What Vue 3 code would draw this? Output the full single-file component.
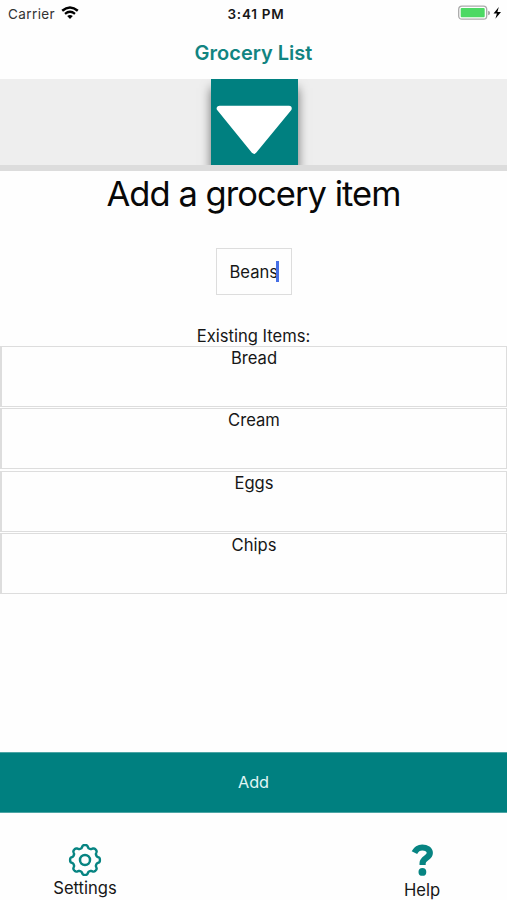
<script setup>
const items = ['Bread', 'Cream', 'Eggs', 'Chips']

// Eight-toothed outline, sampled around the circle
const gear = Array.from({ length: 128 }, (_, i) => {
  const a = (i / 128) * Math.PI * 2
  const r = 13.5 + 1.45 * Math.tanh(1.8 * Math.cos(8 * a) + 0.2)
  return `${(17 + r * Math.sin(a)).toFixed(2)},${(17 - r * Math.cos(a)).toFixed(2)}`
}).join(' ')
</script>

<template>
  <div class="screen">
    <header class="status">
      <div class="network">
        <span class="carrier">Carrier</span>
        <svg class="wifi" width="18" height="14" viewBox="0 0 18 14" fill="none" stroke="#000">
          <path d="M1.2 4.8Q9 -1.7 16.8 4.8" stroke-width="2.5" />
          <path d="M4 7.8Q9 3.7 14 7.8" stroke-width="2.2" />
          <path d="M6.2 10.1Q9 7.9 11.8 10.1L9 13Z" fill="#000" stroke="none" />
        </svg>
      </div>
      <span class="time">3:41 PM</span>
      <div class="power">
        <svg width="44" height="16" viewBox="0 0 44 16">
          <rect x="0.7" y="1.2" width="28" height="13" rx="3.2" fill="#fff" stroke="#aaa" stroke-width="1.3" />
          <rect x="2.7" y="3.1" width="24" height="9.2" rx="1" fill="#4cd964" />
          <path d="M30.2 5.8Q32 6.3 32 8T30.2 10.2Z" fill="#999" />
          <path d="M40.8 2L35.5 8.6H38.9L37.4 13.8L43 6.9H39.4Z" fill="#000" />
        </svg>
      </div>
    </header>
    <h1 class="title"><span>Grocery List</span></h1>
    <section class="banner">
      <div class="drop">
        <svg width="87" height="86" viewBox="0 0 87 86">
          <path d="M8.5 29.5H78L43 72Z" fill="#fff" stroke="#fff" stroke-width="5.5" stroke-linejoin="round" />
        </svg>
      </div>
    </section>
    <main class="content">
      <h2 class="heading"><span>Add a grocery item</span></h2>
      <div class="field"><span>Beans</span><i class="caret"></i></div>
      <p class="label"><span>Existing Items:</span></p>
      <ul class="list">
        <li v-for="item in items" :key="item">{{ item }}</li>
      </ul>
    </main>
    <button class="add">Add</button>
    <nav class="tabs">
      <div class="tab settings">
        <svg width="34" height="34" viewBox="0 0 34 34" fill="none" stroke="#078482">
          <polygon :points="gear" stroke-width="2.4" stroke-linejoin="round" />
          <circle cx="17" cy="17" r="5" stroke-width="2.5" />
        </svg>
        <span>Settings</span>
      </div>
      <div class="tab help">
        <svg width="24" height="34" viewBox="0 0 24 34">
          <path d="M4.4 9.6C6.2 6.2 8.7 4.5 12.2 4.5C16.6 4.5 19.8 6.8 19.8 10.1C19.8 15.2 12.6 14.9 12.6 20.2V22" fill="none" stroke="#078482" stroke-width="6.2" />
          <circle cx="12.4" cy="28.9" r="3.9" fill="#078482" />
        </svg>
        <span>Help</span>
      </div>
    </nav>
  </div>
</template>

<style>
body {
  margin: 0;
  background: #fff;
}
</style>

<style scoped>
.screen {
  width: 507px;
  height: 900px;
  overflow: hidden;
  display: flex;
  flex-direction: column;
  background: #fefefe;
  color: #171717;
  font: 400 16.6px/20px Inter, sans-serif;
}
.status {
  height: 28px;
  flex: none;
  display: grid;
  grid-template-columns: 1fr auto 1fr;
  align-items: center;
  padding: 0 5px 0 8px;
  box-sizing: border-box;
  font-size: 13.5px;
}
.network {
  display: flex;
  align-items: center;
  gap: 6px;
}
.carrier {
  color: #333;
  letter-spacing: 0.4px;
}
.wifi {
  margin-top: -2px;
}
.time {
  margin-left: 2px;
  font-size: 13.5px;
  font-weight: 600;
  letter-spacing: 0.75px;
}
.power {
  display: flex;
  justify-content: flex-end;
  margin-top: -2px;
}
.title {
  height: 51px;
  flex: none;
  margin: 0;
  color: #118481;
  font-size: 20px;
  font-weight: 600;
  line-height: 50px;
  text-align: center;
}
.banner {
  height: 92px;
  flex: none;
  box-sizing: border-box;
  border-bottom: 6px solid #dcdcdc;
  background: #eee;
  display: flex;
  justify-content: center;
}
.drop {
  width: 87px;
  height: 86px;
  margin-left: 2px;
  background: #008080;
  box-shadow: 0 9px 10px 0 #0008;
  clip-path: inset(0 -20px 0 -20px);
}
.drop svg {
  display: block;
}
.content {
  height: 581px;
  flex: none;
  display: flex;
  flex-direction: column;
  align-items: center;
}
.heading {
  margin: 0;
  height: 77px;
  color: #080808;
  font-size: 34.5px;
  font-weight: 400;
  line-height: 46px;
  letter-spacing: -0.95px;
}
.field {
  width: 76px;
  height: 47px;
  box-sizing: border-box;
  border: 1px solid #ddd;
  display: flex;
  align-items: center;
  padding-left: 13px;
}
.caret {
  width: 2.5px;
  height: 21px;
  flex: none;
  margin-left: -2px;
  background: #466fe5;
}
.label {
  height: 20px;
  margin: 31px 0 0;
  line-height: 20px;
}
.list {
  width: 100%;
  margin: 0;
  padding: 0;
  list-style: none;
  display: flex;
  flex-direction: column;
  gap: 1.2px;
}
.list li {
  height: 61.1px;
  box-sizing: border-box;
  border: 1px solid #ddd;
  border-left-width: 2px;
  line-height: 22px;
  text-align: center;
}
.add {
  width: 100%;
  height: 61px;
  flex: none;
  border: 1px solid #4ca5a5;
  border-width: 1px 0;
  padding: 0;
  background: #008080;
  color: #e1f6f5;
  font: 400 16.3px/59px Inter, sans-serif;
}
.tabs {
  flex: 1;
  display: flex;
  justify-content: space-between;
  padding: 30px 49px 0;
}
.tab {
  width: 72px;
  display: flex;
  flex-direction: column;
  align-items: center;
}
.tab svg {
  display: block;
}
.settings span {
  margin-top: 1px;
}
.help span {
  margin-top: 3px;
}
</style>
